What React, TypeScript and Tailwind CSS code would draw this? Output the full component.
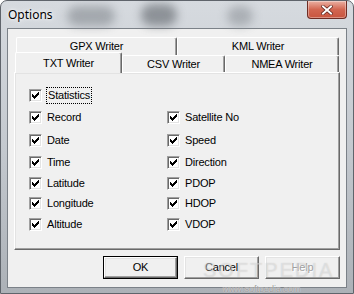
import clsx from 'clsx'

const font = { fontFamily: '"Liberation Sans", Arial, sans-serif' }

const rows: { left: string; right: string; h: string }[] = [
    { left: 'Record', right: 'Satellite No', h: 'h-[23px]' },
    { left: 'Date', right: 'Speed', h: 'h-[22px]' },
    { left: 'Time', right: 'Direction', h: 'h-[21px]' },
    { left: 'Latitude', right: 'PDOP', h: 'h-[20px]' },
    { left: 'Longitude', right: 'HDOP', h: 'h-[21px]' },
    { left: 'Altitude', right: 'VDOP', h: 'h-[13px]' },
]

function CheckBox() {
    return (
        <span className="w-[13px] h-[13px] shrink-0 flex items-center justify-center bg-white border border-t-[#a0a0a0] border-l-[#a0a0a0] border-r-white border-b-white shadow-[inset_1px_1px_#696969,inset_-1px_-1px_#e3e3e3]">
            <svg width="7" height="7" viewBox="0 0 7 7" shapeRendering="crispEdges">
                <path d="M0 2h1v3H0z M1 3h1v3H1z M2 4h1v3H2z M3 3h1v3H3z M4 2h1v3H4z M5 1h1v3H5z M6 0h1v3H6z" fill="#000" />
            </svg>
        </span>
    )
}

function Option({ label, focused }: { label: string; focused?: boolean }) {
    return (
        <div className="flex items-center h-[13px]">
            <CheckBox />
            {focused ? (
                <span className="ml-[4px] h-[17px] flex items-center border border-dotted border-black pl-[1px] pr-[1px]">{label}</span>
            ) : (
                <span className="ml-[5px]">{label}</span>
            )}
        </div>
    )
}

function Tab({ label, w, h, selected }: { label: string; w: string; h: string; selected?: boolean }) {
    return (
        <div
            className={clsx(
                'flex items-center justify-center shrink-0 bg-[#f0f0f0] rounded-t-[2px] border-l border-t border-r border-l-white border-t-white border-r-[#696969] shadow-[inset_-1px_0_#a0a0a0]',
                w,
                h,
                selected && 'relative z-10 -mb-[1px]',
            )}
        >
            {label}
        </div>
    )
}

function Button({ label, isDefault, disabled }: { label: string; isDefault?: boolean; disabled?: boolean }) {
    return (
        <div className={clsx('w-[75px] h-[23px] flex', isDefault && 'border border-black')}>
            <div className="flex-1 flex items-center justify-center bg-[#f0f0f0] border border-t-white border-l-white border-r-[#696969] border-b-[#696969] shadow-[inset_-1px_-1px_#a0a0a0,inset_1px_1px_#e3e3e3]">
                <span className={clsx(disabled && 'text-[#a0a0a0] [text-shadow:1px_1px_0_#fff]')}>{label}</span>
            </div>
        </div>
    )
}

export default function App() {
    return (
        <div
            className="w-[354px] h-[294px] relative flex flex-col rounded-t-[7px] border border-[#5f646b] bg-gradient-to-b from-[#d6dadf] via-[#c4c9cf] to-[#acb1b7] text-[11px] tracking-[-0.2px] text-black overflow-hidden"
            style={font}
        >
            {/* title bar */}
            <div className="relative h-[27px] shrink-0 flex items-start justify-between">
                <div className="absolute left-[66px] top-[5px] w-[48px] h-[20px] rounded-full bg-[#8f949a] blur-[5px] opacity-70" />
                <div className="absolute left-[140px] top-[3px] w-[36px] h-[22px] rounded-full bg-[#6f747a] blur-[5px] opacity-70" />
                <div className="absolute left-[226px] top-[5px] w-[26px] h-[20px] rounded-full bg-[#8f949a] blur-[5px] opacity-60" />
                <span
                    className="relative pl-[7px] pt-[5px] text-[12px] tracking-normal text-black [text-shadow:0_0_6px_#fff,0_0_3px_#fff]"
                    style={{ fontFamily: '"Noto Sans", "Liberation Sans", sans-serif' }}
                >
                    Options
                </span>
                <div className="relative mr-[6px] w-[40px] h-[18px] flex items-center justify-center rounded-b-[4px] border border-t-0 border-[#6e2c24] bg-gradient-to-b from-[#eab0a3] via-[#d26651] to-[#c8553f] shadow-[inset_0_0_0_1px_rgba(255,255,255,0.35)]">
                    <svg width="12" height="10" viewBox="0 0 12 10">
                        <path d="M2 1.5 L10 8.5 M10 1.5 L2 8.5" stroke="#5a2018" strokeWidth="3.4" strokeLinecap="square" />
                        <path d="M2 1.5 L10 8.5 M10 1.5 L2 8.5" stroke="#fff" strokeWidth="2" strokeLinecap="square" />
                    </svg>
                </div>
            </div>

            {/* client area */}
            <div className="mx-[6px] mb-[5px] flex-1 flex flex-col border border-[#7b8188] bg-[#f0f0f0] px-[6px] pt-[8px] pb-[8px]">
                <div className="flex h-[18px] ml-[2px]">
                    <Tab label="GPX Writer" w="w-[161px]" h="h-[18px]" />
                    <Tab label="KML Writer" w="w-[162px]" h="h-[18px]" />
                </div>
                <div className="flex items-end h-[17px] ml-[1px]">
                    <Tab label="TXT Writer" w="w-[107px]" h="h-[21px]" selected />
                    <Tab label="CSV Writer" w="w-[103px]" h="h-[17px]" />
                    <Tab label="NMEA Writer" w="w-[114px]" h="h-[17px]" />
                </div>

                <div className="h-[178px] shrink-0 border border-t-white border-l-white border-r-[#696969] border-b-[#696969] shadow-[inset_-1px_-1px_#a0a0a0,inset_1px_1px_#e3e3e3] pt-[16px] pl-[14px]">
                    <div className="h-[22px]">
                        <Option label="Statistics" focused />
                    </div>
                    {rows.map((r) => (
                        <div key={r.left} className={clsx('flex', r.h)}>
                            <div className="w-[138px]">
                                <Option label={r.left} />
                            </div>
                            <Option label={r.right} />
                        </div>
                    ))}
                </div>

                <div className="mt-[6px] flex justify-end gap-[6px]">
                    <Button label="OK" isDefault />
                    <Button label="Cancel" />
                    <Button label="Help" disabled />
                </div>
            </div>

            {/* watermark */}
            <span className="absolute left-[202px] top-[259px] text-[20px] leading-none tracking-[2px] text-white/40 [text-shadow:0_0_1px_rgba(120,120,120,0.35)] pointer-events-none">
                SOFTPEDIA
            </span>
            <span className="absolute left-[222px] top-[284px] text-[9px] leading-[9px] tracking-normal text-[#9a9a9a] [text-shadow:0_0_1px_#fff] pointer-events-none">
                www.softpedia.com
            </span>
        </div>
    )
}
